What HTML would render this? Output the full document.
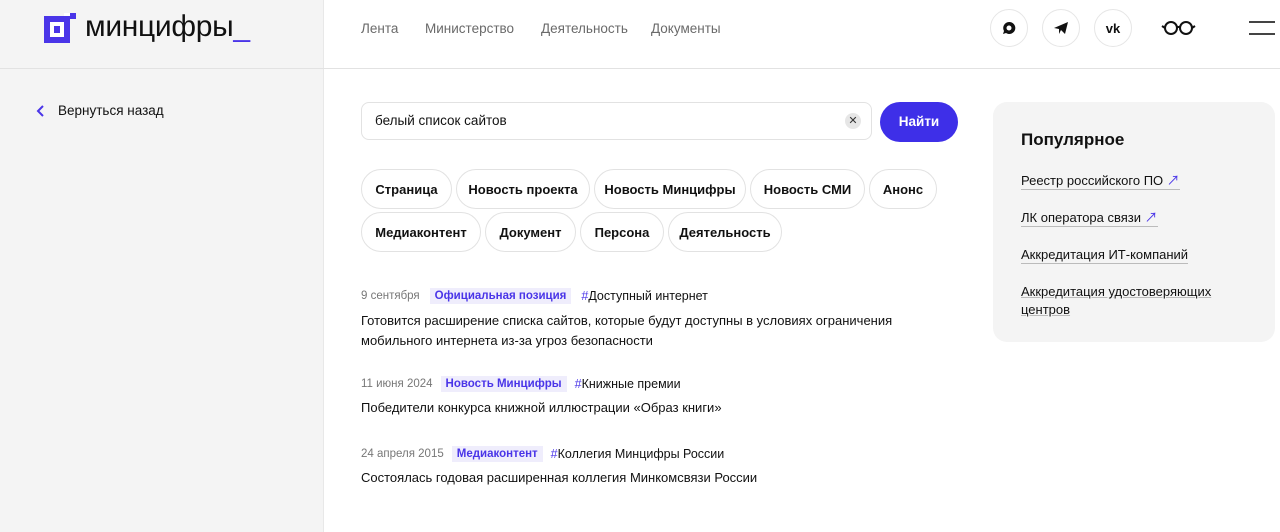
<!DOCTYPE html>
<html><head><meta charset="utf-8"><style>
*{box-sizing:border-box;margin:0;padding:0}
body{width:1280px;height:532px;overflow:hidden;background:#fff;font-family:"Liberation Sans","Noto Sans CJK SC",sans-serif;color:#111;position:relative}
.side{position:absolute;left:0;top:0;width:324px;height:532px;background:#f4f4f4;border-right:1px solid #e8e8e8}
.hline{position:absolute;left:0;top:68px;width:1280px;height:1px;background:#e2e2e2}
.abs{position:absolute}
.nav{top:21px;font-size:13.5px;color:#6a6a6a}
.circ{top:9px;width:38px;height:38px;border:1px solid #e6e6e6;border-radius:50%;display:flex;align-items:center;justify-content:center}
.chip{position:absolute;height:40px;border:1px solid #e2e2e2;border-radius:20px;font-size:13px;font-weight:bold;display:flex;align-items:center;justify-content:center}
.meta{font-size:11.5px;color:#777}
.tag{font-size:11.5px;font-weight:bold;color:#4a35e8;background:#efedfc;padding:2px 5px}
.ht{font-size:12.5px;color:#111}
.ht b{color:#4a35e8;font-weight:normal}
.ttl{font-size:13px;line-height:20px;color:#111}
.pop a{display:block;font-size:13px;color:#111;text-decoration:none;border-bottom:1px solid #bbb;line-height:17px}
</style></head><body>
<div class="side"></div>
<div class="hline"></div>
<svg class="abs" style="left:44px;top:13px" width="32" height="30"><rect x="0" y="3" width="26" height="27" fill="#4a35e8"/><rect x="6" y="9" width="14" height="15" fill="#fff"/><rect x="10" y="13" width="6" height="7" fill="#4a35e8"/><rect x="26" y="0" width="6" height="6" fill="#4a35e8"/><rect x="20" y="0" width="6" height="3" fill="#fff"/></svg>
<div class="abs" style="left:85px;top:10px;font-size:30px;letter-spacing:-0.3px">минцифры<span style="color:#4a35e8">_</span></div>
<div class="abs nav" style="left:361px">Лента</div>
<div class="abs nav" style="left:425px">Министерство</div>
<div class="abs nav" style="left:541px">Деятельность</div>
<div class="abs nav" style="left:651px">Документы</div>
<div class="abs circ" style="left:990px"><svg width="16" height="16"><path d="M8 2a6 6 0 1 1-3 11l-3 1 1-3A6 6 0 0 1 8 2z" fill="#111"/><circle cx="8" cy="8" r="2.5" fill="#fff"/></svg></div>
<div class="abs circ" style="left:1042px"><svg width="16" height="16"><path d="M1 8l14-6-3 12-4-4-2 4v-5z" fill="#111"/></svg></div>
<div class="abs circ" style="left:1094px;font-weight:bold;font-size:13px">vk</div>
<svg class="abs" style="left:1161px;top:20px" width="36" height="16"><circle cx="10" cy="8" r="6" fill="none" stroke="#111" stroke-width="2"/><circle cx="25" cy="8" r="6" fill="none" stroke="#111" stroke-width="2"/><path d="M16 7h3M1 6l3 2M34 6l-3 2" stroke="#111" stroke-width="2"/></svg>
<div class="abs" style="left:1249px;top:21px;width:26px;height:2px;background:#444"></div>
<div class="abs" style="left:1249px;top:33px;width:26px;height:2px;background:#444"></div>
<svg class="abs" style="left:36px;top:105px" width="10" height="12"><path d="M7 1L2 6l5 5" fill="none" stroke="#4a35e8" stroke-width="2"/></svg>
<div class="abs" style="left:58px;top:103px;font-size:13.5px">Вернуться назад</div>
<div class="abs" style="left:361px;top:102px;width:511px;height:38px;border:1px solid #e2e2e2;border-radius:8px"></div>
<div class="abs" style="left:375px;top:113px;font-size:13.5px">белый список сайтов</div>
<div class="abs" style="left:845px;top:113px;width:16px;height:16px;border-radius:50%;background:#e6e6e6;font-size:11px;text-align:center;line-height:16px;color:#333">✕</div>
<div class="abs" style="left:880px;top:102px;width:78px;height:40px;border-radius:20px;background:#3e2fe8;color:#fff;font-size:13.5px;font-weight:bold;text-align:center;line-height:40px">Найти</div>
<div class="chip" style="left:361px;top:169px;width:91px">Страница</div>
<div class="chip" style="left:456px;top:169px;width:134px">Новость проекта</div>
<div class="chip" style="left:594px;top:169px;width:152px">Новость Минцифры</div>
<div class="chip" style="left:750px;top:169px;width:115px">Новость СМИ</div>
<div class="chip" style="left:869px;top:169px;width:68px">Анонс</div>
<div class="chip" style="left:361px;top:212px;width:120px">Медиаконтент</div>
<div class="chip" style="left:485px;top:212px;width:91px">Документ</div>
<div class="chip" style="left:580px;top:212px;width:84px">Персона</div>
<div class="chip" style="left:668px;top:212px;width:114px">Деятельность</div>
<div class="abs" style="left:361px;top:288px;display:flex;gap:10px;align-items:center"><span class="meta">9 сентября</span><span class="tag">Официальная позиция</span><span class="ht"><b>#</b>Доступный интернет</span></div>
<div class="abs ttl" style="left:361px;top:311px;width:560px">Готовится расширение списка сайтов, которые будут доступны в условиях ограничения мобильного интернета из-за угроз безопасности</div>
<div class="abs" style="left:361px;top:376px;display:flex;gap:8px;align-items:center"><span class="meta">11 июня 2024</span><span class="tag">Новость Минцифры</span><span class="ht"><b>#</b>Книжные премии</span></div>
<div class="abs ttl" style="left:361px;top:398px">Победители конкурса книжной иллюстрации «Образ книги»</div>
<div class="abs" style="left:361px;top:446px;display:flex;gap:8px;align-items:center"><span class="meta">24 апреля 2015</span><span class="tag">Медиаконтент</span><span class="ht"><b>#</b>Коллегия Минцифры России</span></div>
<div class="abs ttl" style="left:361px;top:468px">Состоялась годовая расширенная коллегия Минкомсвязи России</div>
<div class="abs pop" style="left:993px;top:102px;width:282px;height:240px;background:#f4f4f4;border-radius:14px;padding:28px">
<div style="font-size:17px;font-weight:bold;margin-bottom:22px">Популярное</div>
<div style="margin-bottom:19px"><a style="display:inline-block">Реестр российского ПО <span style="color:#4a35e8">↗</span></a></div>
<div style="margin-bottom:19px"><a style="display:inline-block">ЛК оператора связи <span style="color:#4a35e8">↗</span></a></div>
<div style="margin-bottom:19px"><a style="display:inline-block">Аккредитация ИТ-компаний</a></div>
<div><a style="display:inline;border:none;text-decoration:underline;text-decoration-color:#bbb;line-height:18px">Аккредитация удостоверяющих центров</a></div>
</div>
</body></html>
